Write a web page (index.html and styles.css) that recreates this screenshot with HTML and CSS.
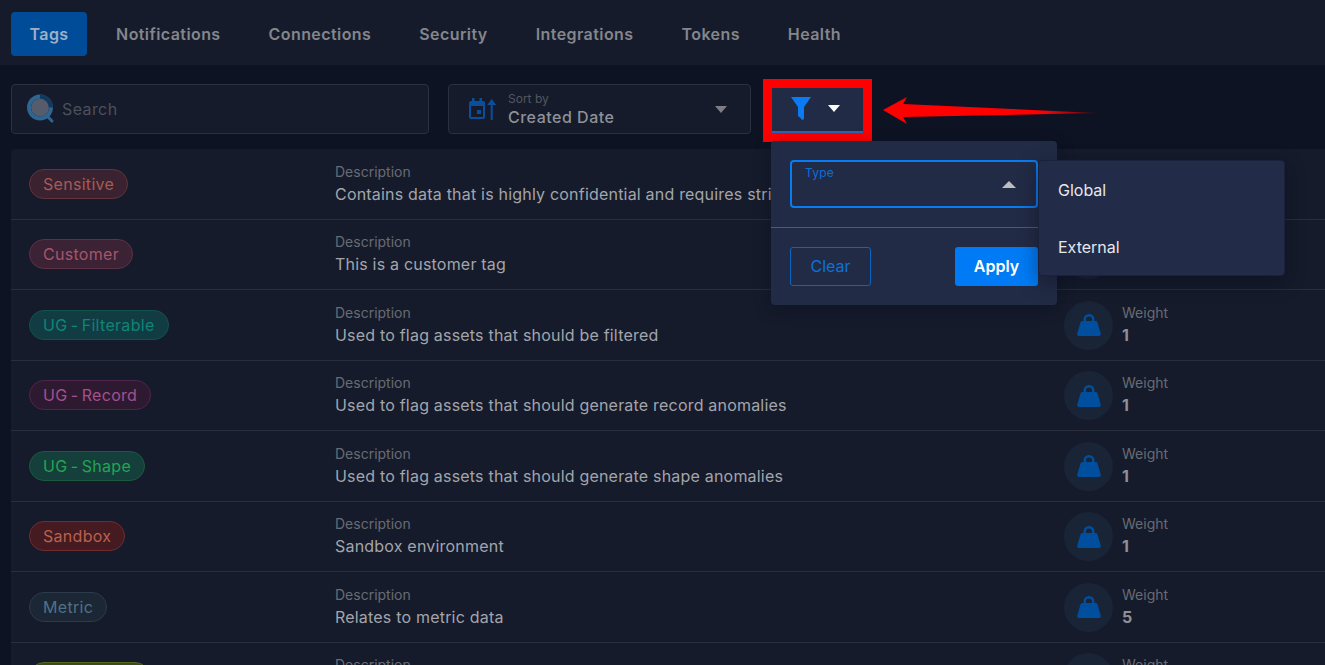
FILE: index.html
```html
<!DOCTYPE html>
<html lang="en">
<head>
    <meta charset="UTF-8">
    <meta name="viewport" content="width=device-width, initial-scale=1.0">
    <title>Tags</title>
    <link rel="stylesheet" href="styles.css">
</head>
<body>
    <svg class="defs" width="0" height="0">
        <symbol id="weight" viewBox="0 0 26 26">
            <circle cx="13" cy="7.500" r="4.300" fill="none" stroke="#004f9f" stroke-width="2.400"/>
            <path d="M6.500 9h13c1 0 1.700.5 2 1.500l3.200 11c.3 1.200-.3 2.500-1.700 2.500H3c-1.400 0-2-1.300-1.700-2.500l3.200-11c.3-1 1-1.500 2-1.500z"/>
        </symbol>
    </svg>

    <nav class="tabs">
        <a class="tab active">Tags</a>
        <a class="tab">Notifications</a>
        <a class="tab">Connections</a>
        <a class="tab">Security</a>
        <a class="tab">Integrations</a>
        <a class="tab">Tokens</a>
        <a class="tab">Health</a>
    </nav>

    <div class="toolbar">
        <div class="search">
            <svg class="search-icon" width="30" height="30" viewBox="0 0 30 30">
                <circle cx="14" cy="13.500" r="9" fill="#565c6b"/>
                <circle cx="14" cy="13.500" r="11" fill="none" stroke="#2f6691" stroke-width="4"/>
                <path d="M14 2.500a11 11 0 0 1 11 11" fill="none" stroke="#15395e" stroke-width="4"/>
                <path d="M21 22l5 5" stroke="#2f6691" stroke-width="3" stroke-linecap="round"/>
            </svg>
            <span class="placeholder">Search</span>
        </div>
        <div class="sort">
            <svg class="sort-icon" width="28" height="22" viewBox="0 0 28 22">
                <path d="M3 0h2.500v3h5V0H13v3h1a2 2 0 0 1 2 2v14a2 2 0 0 1-2 2H2a2 2 0 0 1-2-2V5a2 2 0 0 1 2-2h1zM2 8v11h12V8zM8 12h4v4H8z" fill="#0a4f9c" fill-rule="evenodd"/>
                <path d="M22.700 22V5" stroke="#0a4f9c" stroke-width="2"/>
                <path d="M18.200 7l4.500-6 4.500 6z" fill="#0a4f9c"/>
            </svg>
            <div class="sort-text">
                <span class="sort-label">Sort by</span>
                <span class="sort-value">Created Date</span>
            </div>
            <span class="caret-down"></span>
        </div>
        <div class="filter-btn">
            <svg width="20" height="24" viewBox="0 0 20 24">
                <path d="M0 1h20l-7 10v11a1.500 1.500 0 0 1-3 .5L7 20v-9z" fill="#0a7bf5"/>
            </svg>
            <span class="caret-white"></span>
        </div>
    </div>

    <div class="list">
        <div class="row">
            <div class="tag-cell"><span class="pill pill-sensitive">Sensitive</span></div>
            <div class="desc"><span class="label">Description</span><span class="text">Contains data that is highly confidential and requires strict access</span></div>
            <div class="weight"><span class="weight-icon"><svg width="26" height="26"><use href="#weight"/></svg></span><div class="weight-text"><span class="label">Weight</span><span class="weight-value">1</span></div></div>
        </div>
        <div class="row">
            <div class="tag-cell"><span class="pill pill-customer">Customer</span></div>
            <div class="desc"><span class="label">Description</span><span class="text">This is a customer tag</span></div>
            <div class="weight"><span class="weight-icon"><svg width="26" height="26"><use href="#weight"/></svg></span><div class="weight-text"><span class="label">Weight</span><span class="weight-value">1</span></div></div>
        </div>
        <div class="row">
            <div class="tag-cell"><span class="pill pill-filterable">UG - Filterable</span></div>
            <div class="desc"><span class="label">Description</span><span class="text">Used to flag assets that should be filtered</span></div>
            <div class="weight"><span class="weight-icon"><svg width="26" height="26"><use href="#weight"/></svg></span><div class="weight-text"><span class="label">Weight</span><span class="weight-value">1</span></div></div>
        </div>
        <div class="row">
            <div class="tag-cell"><span class="pill pill-record">UG - Record</span></div>
            <div class="desc"><span class="label">Description</span><span class="text">Used to flag assets that should generate record anomalies</span></div>
            <div class="weight"><span class="weight-icon"><svg width="26" height="26"><use href="#weight"/></svg></span><div class="weight-text"><span class="label">Weight</span><span class="weight-value">1</span></div></div>
        </div>
        <div class="row">
            <div class="tag-cell"><span class="pill pill-shape">UG - Shape</span></div>
            <div class="desc"><span class="label">Description</span><span class="text">Used to flag assets that should generate shape anomalies</span></div>
            <div class="weight"><span class="weight-icon"><svg width="26" height="26"><use href="#weight"/></svg></span><div class="weight-text"><span class="label">Weight</span><span class="weight-value">1</span></div></div>
        </div>
        <div class="row">
            <div class="tag-cell"><span class="pill pill-sandbox">Sandbox</span></div>
            <div class="desc"><span class="label">Description</span><span class="text">Sandbox environment</span></div>
            <div class="weight"><span class="weight-icon"><svg width="26" height="26"><use href="#weight"/></svg></span><div class="weight-text"><span class="label">Weight</span><span class="weight-value">1</span></div></div>
        </div>
        <div class="row">
            <div class="tag-cell"><span class="pill pill-metric">Metric</span></div>
            <div class="desc"><span class="label">Description</span><span class="text">Relates to metric data</span></div>
            <div class="weight"><span class="weight-icon"><svg width="26" height="26"><use href="#weight"/></svg></span><div class="weight-text"><span class="label">Weight</span><span class="weight-value">5</span></div></div>
        </div>
        <div class="row">
            <div class="tag-cell"><span class="pill pill-olive">Compliance</span></div>
            <div class="desc"><span class="label">Description</span><span class="text">Relates to compliance data</span></div>
            <div class="weight"><span class="weight-icon"><svg width="26" height="26"><use href="#weight"/></svg></span><div class="weight-text"><span class="label">Weight</span><span class="weight-value">1</span></div></div>
        </div>
    </div>

    <!-- filter popover, sits over the list -->
    <div class="filter-panel">
        <div class="panel-top">
            <div class="type-select">
                <span class="type-label">Type</span>
                <span class="caret-up"></span>
            </div>
        </div>
        <div class="panel-actions">
            <button class="btn-clear">Clear</button>
            <button class="btn-apply">Apply</button>
        </div>
    </div>
    <ul class="type-menu">
        <li>Global</li>
        <li>External</li>
    </ul>

    <!-- red annotation arrow -->
    <svg class="arrow" width="216" height="30" viewBox="0 0 216 30">
        <defs>
            <linearGradient id="fade" x1="0" x2="1" y1="0" y2="0">
                <stop offset="0" stop-color="#ff0000"/>
                <stop offset="0.75" stop-color="#ff0000"/>
                <stop offset="1" stop-color="#ff0000" stop-opacity="0.25"/>
            </linearGradient>
        </defs>
        <polygon points="0,14 24,1 20,8 214,17 20,21 24,28" fill="url(#fade)"/>
    </svg>
</body>
</html>
```

FILE: styles.css
```css
* {
    box-sizing: border-box;
}
html, body {
    height: 100%;
}
body {
    margin: 0;
    overflow: hidden;
    background-color: #0d1323;
    font-family: Inter, "Noto Sans", sans-serif;
    color: #a3a5ab;
}
.defs {
    position: absolute;
}

/* tabs */
.tabs {
    display: flex;
    align-items: center;
    gap: 10px;
    height: 65px;
    padding: 2px 11px 0;
    background-color: #151b2b;
}
.tab {
    display: flex;
    align-items: center;
    height: 44px;
    padding: 0 19px;
    border-radius: 4px;
    font-size: 16px;
    font-weight: 600;
    letter-spacing: 0.420px;
    color: #84868c;
}
.tab.active {
    padding: 0 18.500px;
    background-color: #004c99;
    color: #9fb0c6;
}

/* toolbar */
.toolbar {
    display: flex;
    gap: 19px;
    padding: 19px 0 15px 11px;
}
.search {
    display: flex;
    align-items: center;
    width: 418px;
    height: 50px;
    padding-left: 14px;
    background-color: #151b2b;
    border: 1px solid #2a3040;
    border-radius: 4px;
}
.search-icon {
    margin-right: 6px;
}
.placeholder {
    font-size: 16px;
    letter-spacing: 0.400px;
    color: #4c505b;
}
.sort {
    display: flex;
    align-items: center;
    width: 303px;
    height: 50px;
    padding: 0 23px 0 20px;
    background-color: #151b2b;
    border: 1px solid #2a3040;
    border-radius: 4px;
}
.sort-text {
    display: flex;
    flex-direction: column;
    flex: 1;
    margin: 2px 0 0 11px;
}
.sort-label {
    font-size: 12px;
    line-height: 14px;
    color: #54575f;
}
.sort-value {
    margin-top: 1px;
    font-size: 16px;
    line-height: 21px;
    font-weight: 500;
    letter-spacing: 0.500px;
    color: #8f9197;
}
.caret-down {
    width: 0;
    height: 0;
    border-left: 6.500px solid transparent;
    border-right: 6.500px solid transparent;
    border-top: 7px solid #7c7e84;
}
.filter-btn {
    display: flex;
    align-items: center;
    gap: 17px;
    width: 91px;
    height: 45px;
    margin: 4px 0 0 2px;
    padding: 0 0 3px 19px;
    background-color: #222b45;
    border-bottom: 2px solid #2f62b5;
    outline: 9px solid #ff0000;
}
.caret-white {
    width: 0;
    height: 0;
    border-left: 6.500px solid transparent;
    border-right: 6.500px solid transparent;
    border-top: 7px solid #ffffff;
}

/* tag list */
.list {
    margin-left: 11px;
    background-color: #151b2b;
    border-radius: 4px 0 0 0;
}
.row {
    display: grid;
    grid-template-columns: 306px 729px 1fr;
    align-items: center;
    height: 70.500px;
    padding-left: 18px;
    border-bottom: 1px solid #282e3d;
}
.pill {
    display: inline-flex;
    align-items: center;
    height: 30px;
    padding: 0 13px;
    border: 1px solid;
    border-radius: 15px;
    font-size: 16px;
    letter-spacing: 0.300px;
    word-spacing: -1.500px;
}
.pill-sensitive { background-color: #3a2230; border-color: #63333a; color: #a85a55; }
.pill-customer { background-color: #3b2234; border-color: #5e3145; color: #a6566c; }
.pill-filterable { background-color: #113c44; border-color: #125349; color: #0f8577; }
.pill-record { background-color: #2e1a30; border-color: #50244f; color: #a4508f; }
.pill-shape { background-color: #153f3a; border-color: #1b5a40; color: #23a455; }
.pill-sandbox { background-color: #451a20; border-color: #6f2d2e; color: #b9614f; }
.pill-metric { background-color: #1b2735; border-color: #2d3a4a; color: #4f7188; }
.pill-olive { background-color: #3d4a1c; border-color: #556522; color: #8aa02e; }

.desc, .weight-text {
    display: flex;
    flex-direction: column;
}
.label {
    font-size: 14px;
    line-height: 19px;
    color: #686b73;
}
.text {
    margin-top: 1px;
    font-size: 16px;
    line-height: 24px;
    letter-spacing: 0.200px;
    color: #a3a5ab;
    white-space: nowrap;
}
.weight {
    display: flex;
    align-items: center;
    gap: 9px;
}
.weight-icon {
    display: flex;
    align-items: center;
    justify-content: center;
    width: 49px;
    height: 49px;
    margin-top: 1px;
    border-radius: 50%;
    background-color: #1a2437;
    fill: #004f9f;
}
.weight-value {
    margin-top: 1px;
    font-size: 16px;
    line-height: 24px;
    font-weight: 700;
    color: #8e9198;
}

/* overlays */
.filter-panel {
    position: absolute;
    left: 771px;
    top: 141px;
    width: 286px;
    height: 164px;
    background-color: #222b45;
    border-radius: 4px;
    box-shadow: 0 4px 16px rgba(8, 12, 28, 0.4);
}
.panel-top {
    height: 87px;
    padding: 19px 19px 0;
    border-bottom: 1px solid #525a70;
}
.type-select {
    position: relative;
    width: 248px;
    height: 48px;
    padding: 0 13px;
    border: 2px solid #0a7bf0;
    border-radius: 4px;
}
.type-label {
    display: block;
    font-size: 12px;
    line-height: 22px;
    letter-spacing: 0.200px;
    color: #0b6fd6;
}
.caret-up {
    position: absolute;
    right: 20px;
    top: 19px;
    width: 0;
    height: 0;
    border-left: 7px solid transparent;
    border-right: 7px solid transparent;
    border-bottom: 7px solid #bcbec4;
}
.panel-actions {
    display: flex;
    justify-content: space-between;
    padding: 19px 19px 0;
}
.btn-clear, .btn-apply {
    height: 39px;
    padding-bottom: 3px;
    border-radius: 3px;
    font-family: inherit;
    font-size: 16px;
}
.btn-clear {
    width: 81px;
    background: none;
    border: 1px solid #0a66c2;
    color: #0a72d8;
}
.btn-apply {
    width: 83px;
    background-color: #007bf5;
    border: none;
    font-weight: 600;
    color: #ffffff;
}
.type-menu {
    position: absolute;
    left: 1038px;
    top: 160px;
    width: 247px;
    height: 116px;
    margin: 0;
    padding: 0;
    list-style: none;
    background-color: #222b47;
    border: 1px solid #1a2138;
    border-radius: 4px;
    box-shadow: 0 6px 20px rgba(8, 12, 28, 0.45);
}
.type-menu li {
    display: flex;
    align-items: center;
    height: 57px;
    padding-left: 19px;
    font-size: 16px;
    color: #e6e7ea;
}
.arrow {
    position: absolute;
    left: 883px;
    top: 96px;
}
```
